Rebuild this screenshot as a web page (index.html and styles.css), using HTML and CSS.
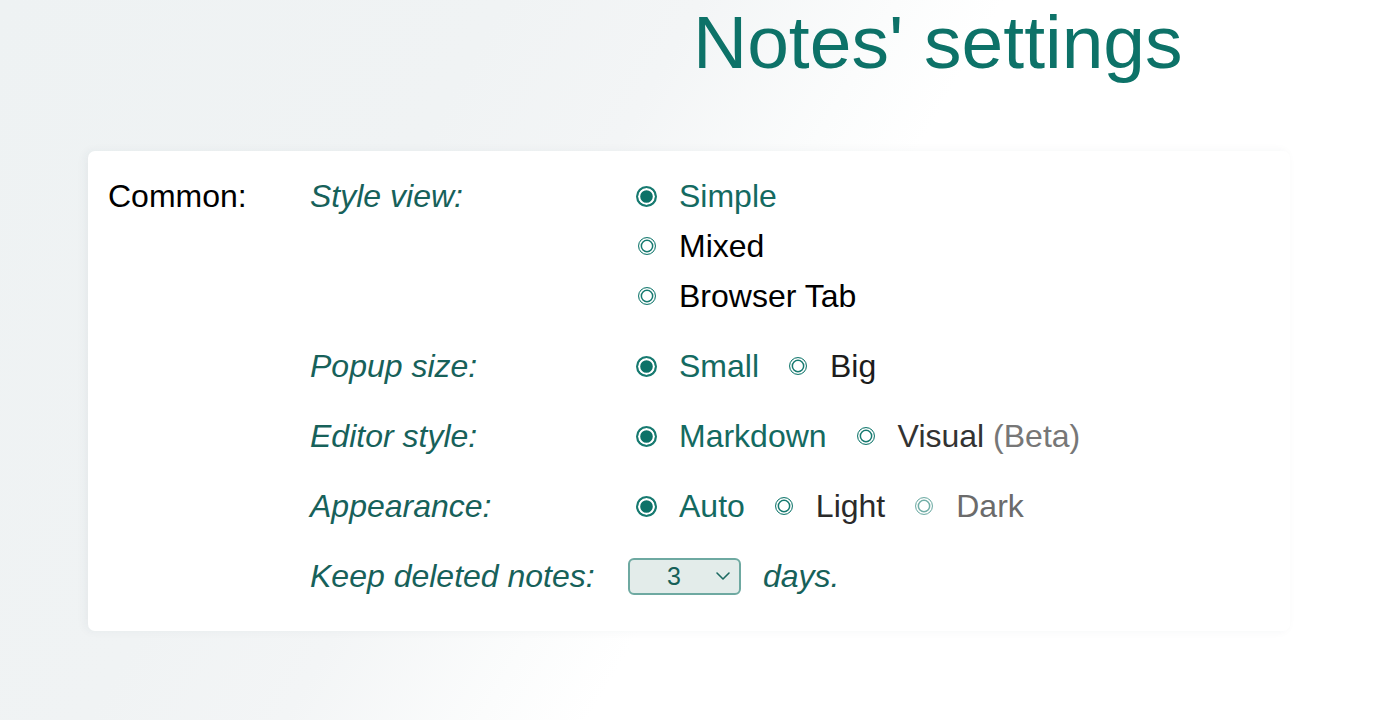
FILE: index.html
```html
<!DOCTYPE html>
<html lang="en">
<head>
<meta charset="utf-8">
<title>Notes' settings</title>
<link rel="stylesheet" href="styles.css">
</head>
<body>
<div class="page">
  <h1 class="title">Notes' settings</h1>
  <section class="card">
    <div class="section-name">Common:</div>
    <div class="rows">
      <div class="row">
        <div class="label">Style view:</div>
        <div class="options vertical">
          <label class="opt selected"><input type="radio" name="view" checked><span>Simple</span></label>
          <label class="opt black"><input type="radio" name="view"><span>Mixed</span></label>
          <label class="opt black"><input type="radio" name="view"><span>Browser Tab</span></label>
        </div>
      </div>
      <div class="row">
        <div class="label">Popup size:</div>
        <div class="options">
          <label class="opt selected"><input type="radio" name="size" checked><span>Small</span></label>
          <label class="opt dark1"><input type="radio" name="size"><span>Big</span></label>
        </div>
      </div>
      <div class="row">
        <div class="label">Editor style:</div>
        <div class="options">
          <label class="opt selected"><input type="radio" name="editor" checked><span>Markdown</span></label>
          <label class="opt dark3"><input type="radio" name="editor"><span>Visual <em class="beta">(Beta)</em></span></label>
        </div>
      </div>
      <div class="row">
        <div class="label">Appearance:</div>
        <div class="options">
          <label class="opt selected"><input type="radio" name="app" checked><span>Auto</span></label>
          <label class="opt dark2"><input type="radio" name="app"><span>Light</span></label>
          <label class="opt faded"><input type="radio" name="app"><span>Dark</span></label>
        </div>
      </div>
      <div class="row">
        <div class="label">Keep deleted notes:</div>
        <div class="options keep">
          <div class="select"><span class="select-value">3</span><svg class="chev" width="16" height="10" viewBox="0 0 16 10"><path d="M2 2 L8 8 L14 2" fill="none" stroke="#1d6a62" stroke-width="1.6" stroke-linecap="round" stroke-linejoin="round"/></svg></div>
          <span class="days">days.</span>
        </div>
      </div>
    </div>
  </section>
</div>
</body>
</html>
```
FILE: styles.css
```css
html, body {
  margin: 0;
  padding: 0;
}
body {
  height: 720px;
  overflow: hidden;
  font-family: "Liberation Sans", Arial, Helvetica, sans-serif;
  background: linear-gradient(120deg, #eef2f3 0%, #f0f3f4 28%, #f3f5f6 39%, #fbfcfc 50%, #ffffff 56%);
}
.page {
  padding-top: 5px;
}
.title {
  margin: 0 0 71px calc(50% + 4px);
  font-size: 75px;
  line-height: 75px;
  font-weight: normal;
  color: #0d7268;
}
.card {
  margin: 0 88px;
  background: #fff;
  border-radius: 7px;
  box-shadow: -3px 0 10px rgba(40, 60, 70, 0.05);
  padding: 20px 20px 30px;
  display: flex;
  font-size: 32px;
  line-height: 50px;
}
.section-name {
  width: 202px;
  color: #000;
}
.rows {
  display: flex;
  flex-direction: column;
  gap: 20px;
}
.row {
  display: flex;
}
.label {
  width: 318px;
  font-style: italic;
  color: #17615a;
}
.options {
  display: flex;
  gap: 20px;
}
.options.vertical {
  flex-direction: column;
  gap: 0;
}
.opt {
  display: flex;
  align-items: center;
  height: 50px;
}
.opt input {
  appearance: none;
  -webkit-appearance: none;
  flex: none;
  margin: 0 23px 0 10px;
  width: 18px;
  height: 18px;
  border: 1.7px solid #177a70;
  border-radius: 50%;
  background: #fff;
  box-shadow: inset 0 0 0 1.6px #fff, inset 0 0 0 3.1px #177a70;
  box-sizing: border-box;
}
.opt input:checked {
  width: 21px;
  height: 21px;
  margin: 0 22px 0 8px;
  border-width: 2px;
  background: #0d7268;
  box-shadow: inset 0 0 0 2.2px #fff;
}
.opt.selected { color: #146a61; }
.opt.black { color: #000; }
.opt.dark1 { color: #1c1c1c; }
.opt.dark2 { color: #2a2a2a; }
.opt.dark3 { color: #333; }
.beta {
  font-style: normal;
  color: #777;
}
.opt.faded { color: #6b6b6b; }
.opt.faded input {
  border-color: #72aea7;
  box-shadow: inset 0 0 0 1.6px #fff, inset 0 0 0 3.1px #72aea7;
}
.keep {
  align-items: center;
  gap: 22px;
}
.select {
  width: 113px;
  height: 37px;
  box-sizing: border-box;
  border: 2px solid #6ea9a1;
  border-radius: 6px;
  background: #e3ecea;
  display: flex;
  align-items: center;
  justify-content: space-between;
  padding: 0 8px 0 37px;
  font-size: 25px;
  color: #155f58;
}
.select-value {
  line-height: 37px;
}
.days {
  font-style: italic;
  color: #17615a;
}
```
